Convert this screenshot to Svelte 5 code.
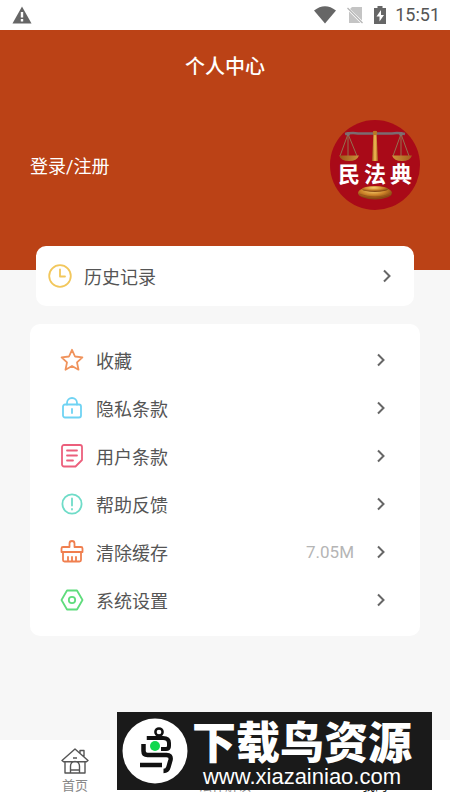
<script>
  const rows = [
    { icon: 'star', label: '收藏', color: '#f0935c' },
    { icon: 'lock', label: '隐私条款', color: '#6fd3f3' },
    { icon: 'note', label: '用户条款', color: '#ec5f7c' },
    { icon: 'info', label: '帮助反馈', color: '#6fdcc8' },
    { icon: 'brush', label: '清除缓存', color: '#f07f4f', value: '7.05M' },
    { icon: 'hex', label: '系统设置', color: '#5fdc7c' }
  ];
</script>

{#snippet chevron()}
  <svg class="chevron" viewBox="0 0 10 14" aria-hidden="true"><path d="M2 1.500 7.500 7 2 12.500" /></svg>
{/snippet}

<div class="app">
  <div class="status">
    <svg class="warn" viewBox="0 0 20 18" aria-hidden="true">
      <path d="M10 .5 19.500 17.500H.5Z" fill="#666" />
      <path d="M8.800 6h2.400v5.500H8.800zM8.800 13h2.400v2.400H8.800z" fill="#fff" />
    </svg>
    <div class="status-right">
      <svg width="22" height="18" viewBox="0 0 22 18" aria-hidden="true"><path d="M0 4.500Q11-4 22 4.500L11 17.500Z" fill="#666" /></svg>
      <svg width="16" height="18" viewBox="0 0 16 18" aria-hidden="true">
        <path d="M5 1h10v13.500L3 3ZM2 5.500 13.500 17H2Z" fill="#c4c4c4" />
        <path d="m.5 2 15 15" stroke="#b4b4b4" stroke-width="1.300" />
      </svg>
      <svg width="12" height="18" viewBox="0 0 12 18" aria-hidden="true">
        <path d="M3.500 0h5v2H12v16H0V2h3.500Z" fill="#666" />
        <path d="M7 4 2.500 10.500h3V15.500L10 9H7Z" fill="#fff" />
      </svg>
      <span class="time">15:51</span>
    </div>
  </div>

  <header class="hero">
    <h1>个人中心</h1>
    <div class="user">
      <a href="#login">登录/注册</a>
      <div class="avatar">
        <svg viewBox="0 0 90 90" aria-hidden="true">
          <defs>
            <linearGradient id="gold" x1="0" x2="1" y1="0" y2="0">
              <stop offset="0" stop-color="#9a5418" />
              <stop offset=".5" stop-color="#f5bf55" />
              <stop offset="1" stop-color="#a45b1c" />
            </linearGradient>
            <radialGradient id="base" cx=".45" cy=".3" r=".6">
              <stop offset="0" stop-color="#f8d070" />
              <stop offset=".6" stop-color="#cc8328" />
              <stop offset="1" stop-color="#8a4a13" />
            </radialGradient>
          </defs>
          <circle cx="45" cy="45" r="45" fill="#a90a18" />
          <path d="M43.500 11h3l1.500 30h-6Z" fill="url(#gold)" />
          <path d="M15 14q7-1.500 13-.5h34q6-1 13 .5" fill="none" stroke="#7b6b70" stroke-width="2.500" />
          <path d="m18 14-8 22M18 14l9 22M18 14v22M71 14l-8 22M71 14l8 22M71 14v22" fill="none" stroke="#94704f" stroke-width="1" />
          <circle cx="18" cy="14" r="2" fill="#80706e" /><circle cx="71" cy="14" r="2" fill="#80706e" />
          <circle cx="45" cy="13" r="2.200" fill="#b97525" />
          <path d="M9 35.500h20q-2 5.500-10 5.500t-10-5.500ZM62 35.500h20q-2 5.500-10 5.500t-10-5.500Z" fill="url(#gold)" />
          <ellipse cx="45" cy="73" rx="17" ry="6.500" fill="url(#base)" />
          <ellipse cx="45" cy="69" rx="13" ry="3" fill="url(#base)" />
          <path d="M29 74q16 6 32 0" fill="none" stroke="#9b5618" />
        </svg>
        <span>民法典</span>
      </div>
    </div>
  </header>

  <main>
    <button class="history">
      <svg class="icon clock" viewBox="0 0 24 24" aria-hidden="true"><circle cx="12" cy="12" r="10.800" /><path d="M12 5.500v7h5" /></svg>
      <span class="label">历史记录</span>
      {@render chevron()}
    </button>

    <section class="menu">
      {#each rows as row}
        <button class="row">
          <svg class="icon" viewBox="0 0 24 24" style:color={row.color} aria-hidden="true">
            {#if row.icon === 'star'}
              <path d="m12 1.800 3 6.700 7.400.8-5.400 5.100 1.500 7.300L12 18l-6.500 3.700L7 14.400 1.600 9.300 9 8.500Z" />
            {:else if row.icon === 'lock'}
              <rect x="3" y="8.500" width="18" height="13" rx="2" /><path d="M7 8.500V7a5 5 0 0 1 10 0v1.500M12 13v4" />
            {:else if row.icon === 'note'}
              <path d="M4 1h16a2 2 0 0 1 2 2v13l-6.500 6.500H4a2 2 0 0 1-2-2V3a2 2 0 0 1 2-2ZM7 6.500h10M7 11.500h10M7 16.500h6" />
            {:else if row.icon === 'info'}
              <circle cx="12" cy="12" r="9.600" /><path d="M12 6.500v7M12 17v.5" />
            {:else if row.icon === 'brush'}
              <path d="M9.500 7V3.500a2.500 2.500 0 0 1 5 0V7H21a1.500 1.500 0 0 1 1.500 1.500V12h-21V8.500A1.500 1.500 0 0 1 3 7ZM3 12v8a1.500 1.500 0 0 0 1.500 1.500h15A1.500 1.500 0 0 0 21 20v-8M8 17v4M12 17v4M16 17v4" />
            {:else}
              <path d="M7 2.500h10L22.500 12 17 21.500H7L1.500 12Z" /><circle cx="12" cy="12" r="3.200" />
            {/if}
          </svg>
          <span class="label">{row.label}</span>
          {#if row.value}<span class="value">{row.value}</span>{/if}
          {@render chevron()}
        </button>
      {/each}
    </section>
  </main>

  <nav>
    <a href="#home">
      <svg viewBox="0 0 28 28" aria-hidden="true">
        <path d="M4 14v12h20V14M1 13.500 14 2l13 11.500-1.500 1.200h-23ZM19 6V3.500h4V10M9.500 26v-7a4.500 4.500 0 0 1 9 0v7M9.500 23h9M12 11h4" />
      </svg>
      <span>首页</span>
    </a>
    <a href="#law">
      <svg viewBox="0 0 28 28" aria-hidden="true"><path d="M4 4h20v20H4ZM9 10h10M9 15h10" /></svg>
      <span>法律解读</span>
    </a>
    <a href="#me" class="active">
      <svg viewBox="0 0 28 28" aria-hidden="true"><circle cx="14" cy="9" r="5" /><path d="M4 25q1-9 10-9t10 9Z" /></svg>
      <span>我的</span>
    </a>
  </nav>

  <aside class="banner">
    <svg class="bird" viewBox="0 0 66 66" aria-hidden="true">
      <circle cx="33" cy="33" r="32.500" fill="#fff" />
      <g fill="none" stroke="#111" stroke-linejoin="round">
        <circle cx="37" cy="14" r="3.600" stroke-width="2.500" />
        <path d="M26 20h15q6 0 6 5v3q0 3-3 3h-5" stroke-width="4" />
        <path d="M26 22v-4" stroke-width="2.500" />
        <path d="M21.500 26v7q0 4 4 4h19q5 0 4 5l-2 7q-1 4-5 4" stroke-width="4.500" />
        <path d="M18 47h22" stroke-width="4.500" />
      </g>
      <circle cx="33" cy="28" r="5" fill="#12d84e" />
    </svg>
    <div class="banner-text">
      <strong>下载鸟资源</strong>
      <span>www.xiazainiao.com</span>
    </div>
  </aside>
</div>

<style>
  :global(body) { margin: 0; }
  .app {
    position: relative;
    display: flex;
    flex-direction: column;
    min-height: 100vh;
    background: #f7f7f7;
    color: #555;
    font-family: Roboto, "Noto Sans CJK SC", sans-serif;
  }
  a { color: inherit; text-decoration: none; }
  button { border: 0; background: none; color: inherit; font: inherit; text-align: left; cursor: pointer; }
  .status {
    display: flex;
    align-items: center;
    justify-content: space-between;
    height: 30px;
    padding: 0 10px 0 12px;
    background: #fff;
  }
  .warn { width: 20px; height: 18px; }
  .status-right { display: flex; align-items: center; gap: 11px; }
  .time { margin-left: -2px; color: #555; font-size: 18px; line-height: 30px; }
  .hero { height: 240px; background: #bb4216; color: #fff; }
  h1 { margin: 0; font-size: 20px; font-weight: 500; line-height: 74px; text-align: center; }
  .user {
    display: flex;
    align-items: center;
    justify-content: space-between;
    padding: 16px 30px 0;
    font-size: 18px;
  }
  .avatar { position: relative; width: 90px; height: 90px; }
  .avatar svg { display: block; }
  .avatar span {
    position: absolute;
    inset: 40px 0 auto;
    padding-left: 4px;
    font-size: 22px;
    font-weight: 700;
    letter-spacing: 4px;
    line-height: 30px;
    text-align: center;
    white-space: nowrap;
  }
  main { flex: 1; padding: 0 30px; }
  .history {
    position: relative;
    display: flex;
    align-items: center;
    width: calc(100% - 12px);
    height: 60px;
    margin: -24px 6px 18px;
    padding: 0 22px 0 12px;
    border-radius: 10px;
    background: #fff;
    font-size: 18px;
  }
  .menu { padding: 12px 0; border-radius: 10px; background: #fff; }
  .row {
    display: flex;
    align-items: center;
    width: 100%;
    height: 48px;
    padding: 0 34px 0 30px;
    font-size: 18px;
  }
  .icon {
    width: 24px;
    height: 24px;
    margin-right: 12px;
    fill: none;
    stroke: currentColor;
    stroke-width: 1.8;
    stroke-linejoin: round;
    stroke-linecap: round;
  }
  .clock { color: #f2c75c; }
  .label { flex: 1; }
  .value { margin-right: 22px; color: #b5b5b5; font-size: 17px; }
  .chevron { width: 10px; height: 14px; fill: none; stroke: #666; stroke-width: 2; }
  nav { display: flex; height: 60px; background: #fff; }
  nav a {
    display: flex;
    flex: 1;
    flex-direction: column;
    align-items: center;
    padding-top: 7px;
    color: #888;
    font-size: 13px;
    line-height: 22px;
  }
  nav a.active { color: #222; }
  nav svg { width: 28px; height: 28px; fill: none; stroke: #555; stroke-width: 1.4; stroke-linejoin: round; }
  .banner {
    position: absolute;
    right: 18px;
    bottom: 10px;
    display: flex;
    align-items: center;
    box-sizing: border-box;
    width: 315px;
    height: 78px;
    padding: 0 16px 0 5px;
    background: #1a1a1a;
    color: #fff;
  }
  .bird { width: 66px; height: 66px; }
  .banner-text {
    display: flex;
    flex: 1;
    flex-direction: column;
    align-items: center;
    padding-top: 8px;
    white-space: nowrap;
  }
  .banner strong { font-size: 44px; font-weight: 900; line-height: 44px; }
  .banner span { font-family: "Liberation Sans", Arial, sans-serif; font-size: 22px; line-height: 22px; }
</style>
